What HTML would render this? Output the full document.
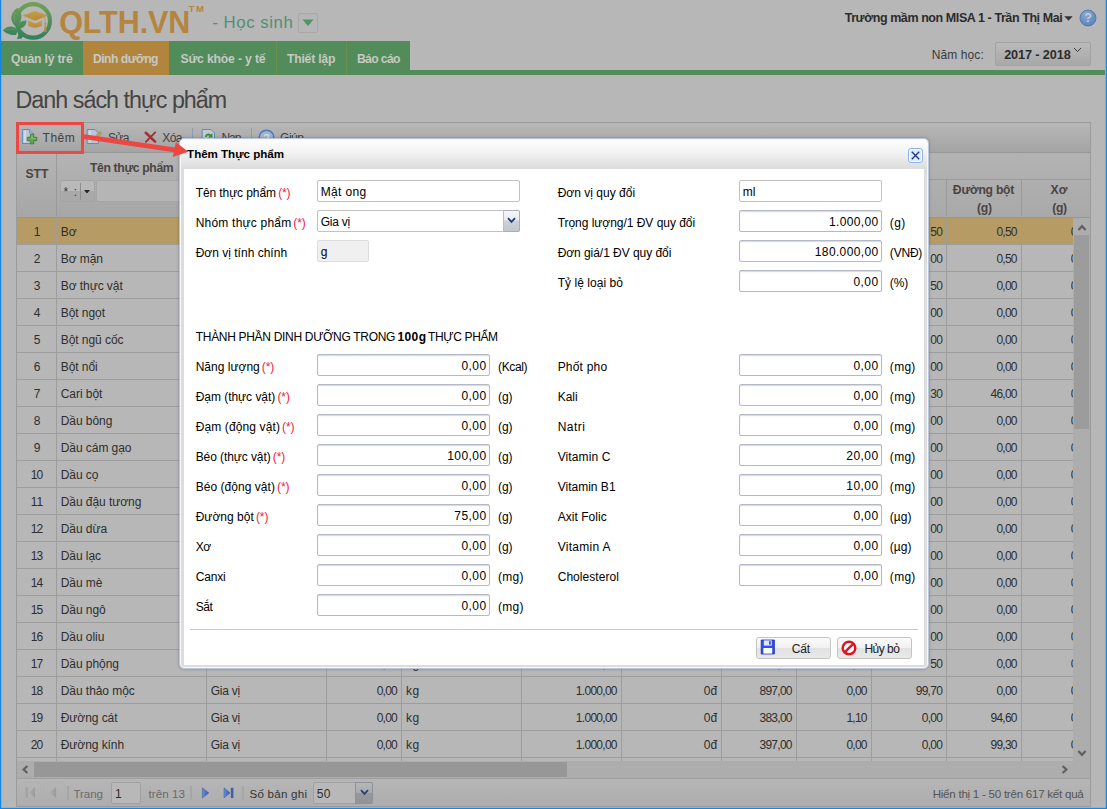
<!DOCTYPE html>
<html lang="vi"><head>
<meta charset="utf-8">
<title>QLTH.VN - Danh sách thực phẩm</title>
<style>
*{box-sizing:border-box;margin:0;padding:0}
html,body{width:1107px;height:809px;overflow:hidden}
body{position:relative;background:#b7b7b7;font-family:"Liberation Sans",sans-serif;font-size:13px;color:#2b2b2b}
.a{position:absolute}
.t{position:absolute;white-space:nowrap;line-height:1;display:inline-block}
.b{font-weight:bold}
/* nav */
.tab{position:absolute;top:41px;height:34px;background:#518c5a}
.tabt{position:absolute;font-weight:bold;font-size:12.2px;color:#c8c8c5;white-space:nowrap;line-height:1}
/* grid */
.hl{position:absolute;left:17px;width:1056px;height:1px;background:#9d9d9d}
.vl{position:absolute;top:217px;height:544px;width:1px;background:#9d9d9d}
.rt{position:absolute;white-space:nowrap;line-height:1;font-size:12px;color:#2e2e2e}
.rn{position:absolute;white-space:nowrap;line-height:1;font-size:13px;color:#2e2e2e;text-align:right}
/* dialog */
.lbl{position:absolute;white-space:nowrap;line-height:1;font-size:13px;color:#000}
.req{color:#f4173c}
.inp{position:absolute;height:22px;background:#fff;border:1px solid #b5b8c8;border-radius:2px;font-size:13px;line-height:20px;color:#000;white-space:nowrap;overflow:hidden}
.num{text-align:right;padding-right:4px;box-shadow:inset 0 1px 1px #d6d8e2}
.txt{padding-left:3px;border-color:#c1c1c1}
</style>
</head>
<body>

<!-- ================= HEADER ================= -->
<div id="header">
  <!-- logo -->
  <svg class="a" style="left:2px;top:0;width:52px;height:41px" viewBox="0 0 52 41">
    <defs>
      <linearGradient id="lg1" gradientUnits="userSpaceOnUse" x1="0" y1="2" x2="0" y2="40"><stop offset="0" stop-color="#76a058"></stop><stop offset="1" stop-color="#2f7f5b"></stop></linearGradient>
      <linearGradient id="lg2" x1="0" y1="0" x2="0" y2="1"><stop offset="0" stop-color="#bea440"></stop><stop offset="1" stop-color="#c0853b"></stop></linearGradient>
    </defs>
    <circle cx="31.2" cy="20.9" r="16.75" fill="none" stroke="url(#lg1)" stroke-width="4.1"></circle>
    <path d="M15.9 7.8 C10 10.5 7.6 18 10.8 23.2 C11.8 25 13.3 26.2 15 26.6 C18.2 24 20.6 18 18.9 12.5 C18.3 10.5 17.2 8.8 15.9 7.8 Z" fill="url(#lg1)"></path>
    <path d="M12.6 10.5 C12 15 12.2 19 12.8 23" stroke="#8aa78a" stroke-width="0.6" fill="none" opacity=".8"></path>
    <path d="M24.4 20.6 C19.6 20 15.8 23.2 15.6 28.4 C20.6 29.2 24.4 26 24.4 20.6 Z" fill="url(#lg1)"></path>
    <path d="M0.9 30.6 C4.5 26.3 11 24.8 14.6 29.4 C15.3 31 15.2 33 14 34.9 C9.5 35.6 4.4 34.1 0.9 30.6 Z" fill="url(#lg1)"></path>
    <path d="M3 30 C7 28.8 10 28.8 13 29.8" stroke="#8aa78a" stroke-width="0.5" fill="none" opacity=".7"></path>
    <path d="M14.2 28.6 L16.6 27 L19.2 31 C20.2 33 21 34 21.8 34.8 L19.6 38.5 L15 38.9 L16.4 35 Z" fill="url(#lg1)"></path>
    <path d="M20.6 15.5 L33.1 10.9 L46.1 15.5 L33.1 20.8 Z" fill="url(#lg2)"></path>
    <path d="M26.3 20.6 L33 23.4 L39.8 20.6 L39.8 25.8 C36 28.2 30 28.2 26.3 25.8 Z" fill="url(#lg2)"></path>
    <path d="M42.4 16.6 L43.3 16.3 L43.7 22.5 L44.7 32 L42.1 32 L42.9 22.5 Z" fill="url(#lg2)"></path>
    <circle cx="43.3" cy="23.8" r="1.1" fill="#bd8a3c"></circle>
  </svg>
  <span class="t b" style="font-size: 30.5px; color: rgb(181, 132, 62); top: 7px; letter-spacing: -0.06px; left: 59.13px;">QLTH.VN</span>
  <span class="t b" style="font-size: 9.6px; color: rgb(181, 132, 62); top: 4px; letter-spacing: 1.3px; left: 188.77px;">TM</span>
  <span class="t" style="font-size: 16.8px; color: rgb(79, 145, 114); top: 15px; letter-spacing: 0.55px; left: 212.24px;">- Học sinh</span>
  <div class="a" style="left:298px;top:13px;width:20px;height:20px;border:1px solid #a8a8a8;border-radius:2px;background:#b6b6b6"></div>
  <svg class="a" style="left:302px;top:19px;width:12px;height:8px" viewBox="0 0 12 8"><path d="M0.5 0.5 L11.5 0.5 L6 7 Z" fill="#4f9565"></path></svg>

  <span class="t b" style="font-size: 12.5px; color: rgb(44, 44, 44); top: 12px; letter-spacing: -0.42px; left: 844.64px;">Trường mầm non MISA 1 - Trần Thị Mai</span>
  <svg class="a" style="left:1064px;top:16px;width:9px;height:5px" viewBox="0 0 9 5"><path d="M0.3 0.3 L8.7 0.3 L4.5 4.8 Z" fill="#333"></path></svg>
  <svg class="a" style="left:1079px;top:9px;width:18px;height:18px" viewBox="0 0 18 18">
    <defs><radialGradient id="hg" cx="0.4" cy="0.3" r="0.8"><stop offset="0" stop-color="#8aa9cf"></stop><stop offset="1" stop-color="#5380b9"></stop></radialGradient></defs>
    <circle cx="9" cy="9" r="8" fill="url(#hg)" stroke="#4672ad" stroke-width="0.8"></circle>
    <text x="9" y="13.4" text-anchor="middle" font-family="Liberation Sans" font-weight="bold" font-size="12.5" fill="#c2ccd9">?</text>
  </svg>

  <span class="t" style="font-size: 12px; color: rgb(58, 58, 58); top: 49px; letter-spacing: 0.1px; left: 931.76px;">Năm học:</span>
  <div class="a" style="left:995px;top:42px;width:96px;height:24px;border:1px solid #a2a2a2;border-radius:2px;background:linear-gradient(#bababa,#a8a8a8)"></div>
  <span class="t b" style="font-size: 12.7px; color: rgb(44, 44, 44); top: 49px; letter-spacing: -0.11px; left: 1004.13px;">2017 - 2018</span>
  <svg class="a" style="left:1073px;top:47px;width:9px;height:6px" viewBox="0 0 9 6"><path d="M1 1 L4.5 4.5 L8 1" fill="none" stroke="#3a3a3a" stroke-width="1"></path></svg>
</div>

<!-- ================= NAV ================= -->
<div id="nav">
  <div class="a" style="left:1px;top:70px;width:1104px;height:5px;background:#518c5a"></div>
  <div class="tab" style="left:1px;width:82px"></div>
  <div class="tab" style="left:83px;width:86px;background:#b1853c"></div>
  <div class="tab" style="left:169px;width:107px"></div>
  <div class="tab" style="left:276px;width:70px;border-left:1px solid #6b9148"></div>
  <div class="tab" style="left:346px;width:64px;border-left:1px solid #6b9148"></div>
  <span class="tabt" style="top: 53px; letter-spacing: -0.19px; left: 10.95px;">Quản lý trẻ</span>
  <span class="tabt" style="top: 53px; letter-spacing: -0.52px; left: 92.95px;">Dinh dưỡng</span>
  <span class="tabt" style="top: 53px; letter-spacing: -0.16px; left: 180.45px;">Sức khỏe - y tế</span>
  <span class="tabt" style="top: 53px; letter-spacing: -0.21px; left: 286.95px;">Thiết lập</span>
  <span class="tabt" style="top: 53px; letter-spacing: -0.64px; left: 356.95px;">Báo cáo</span>
</div>

<!-- ================= TITLE ================= -->
<span class="t" style="font-size: 23.3px; color: rgb(69, 69, 69); top: 89px; letter-spacing: -0.97px; left: 15.45px;">Danh sách thực phẩm</span>

<!-- ================= GRID PANEL ================= -->
<div id="grid">
<div class="a" style="left:16px;top:122px;width:1075px;height:685px;border:1px solid #9b9b9b"></div>
<div class="a" style="left:17px;top:123px;width:1073px;height:29px;background:linear-gradient(#b7b7b7,#a4a4a4)"></div>
<div class="a" style="left:17px;top:152px;width:1073px;height:1px;background:#989898"></div>
<div class="a" style="left:17px;top:153px;width:1073px;height:64px;background:linear-gradient(#b3b3b3,#a9a9a9)"></div>
<div class="a" style="left:17px;top:179px;width:1073px;height:1px;background:#9a9a9a"></div>
<div class="a" style="left:17px;top:153px;width:190px;height:64px;background:linear-gradient(#b4b4b4,#a6a6a6)"></div>
<div class="a" style="left:17px;top:217px;width:1073px;height:1px;background:#979797"></div>
<div class="a" style="left:17px;top:218px;width:1056px;height:26px;background:#b69c64"></div>
<div class="a" style="left:56px;top:153px;width:1px;height:64px;background:#9a9a9a"></div>
<div class="a" style="left:206px;top:153px;width:1px;height:64px;background:#9a9a9a"></div>
<div class="a" style="left:326px;top:179px;width:1px;height:38px;background:#9a9a9a"></div>
<div class="a" style="left:401px;top:179px;width:1px;height:38px;background:#9a9a9a"></div>
<div class="a" style="left:521px;top:179px;width:1px;height:38px;background:#9a9a9a"></div>
<div class="a" style="left:621px;top:179px;width:1px;height:38px;background:#9a9a9a"></div>
<div class="a" style="left:721px;top:179px;width:1px;height:38px;background:#9a9a9a"></div>
<div class="a" style="left:796px;top:179px;width:1px;height:38px;background:#9a9a9a"></div>
<div class="a" style="left:871px;top:179px;width:1px;height:38px;background:#9a9a9a"></div>
<div class="a" style="left:946px;top:179px;width:1px;height:38px;background:#9a9a9a"></div>
<div class="a" style="left:1021px;top:179px;width:1px;height:38px;background:#9a9a9a"></div>
<div class="hl" style="top:244px"></div>
<div class="hl" style="top:271px"></div>
<div class="hl" style="top:298px"></div>
<div class="hl" style="top:325px"></div>
<div class="hl" style="top:352px"></div>
<div class="hl" style="top:379px"></div>
<div class="hl" style="top:406px"></div>
<div class="hl" style="top:433px"></div>
<div class="hl" style="top:460px"></div>
<div class="hl" style="top:487px"></div>
<div class="hl" style="top:514px"></div>
<div class="hl" style="top:541px"></div>
<div class="hl" style="top:568px"></div>
<div class="hl" style="top:595px"></div>
<div class="hl" style="top:622px"></div>
<div class="hl" style="top:649px"></div>
<div class="hl" style="top:676px"></div>
<div class="hl" style="top:703px"></div>
<div class="hl" style="top:730px"></div>
<div class="hl" style="top:757px"></div>
<div class="a" style="left:17px;top:244px;width:1056px;height:1px;background:repeating-linear-gradient(90deg,#b69c64 0,#b69c64 1px,#9d9d9d 1px,#9d9d9d 2px)"></div>
<div class="vl" style="left:56px"></div>
<div class="vl" style="left:206px"></div>
<div class="vl" style="left:326px"></div>
<div class="vl" style="left:401px"></div>
<div class="vl" style="left:521px"></div>
<div class="vl" style="left:621px"></div>
<div class="vl" style="left:721px"></div>
<div class="vl" style="left:796px"></div>
<div class="vl" style="left:871px"></div>
<div class="vl" style="left:946px"></div>
<div class="vl" style="left:1021px"></div>
<span class="rt" style="top: 226px; letter-spacing: -0.21px; left: 33.66px;">1</span>
<span class="rt" style="letter-spacing: -0.06px; top: 226px; left: 60.76px;">Bơ</span>
<span class="rt" style="top: 226px; letter-spacing: -0.26px; left: 210.76px;">Gia vị</span>
<span class="rt" style="top: 226px; letter-spacing: -0.76px; left: 376.65px;">0,00</span>
<span class="rt" style="top: 226px; letter-spacing: 0.39px; left: 406.06px;">kg</span>
<span class="rt" style="top: 226px; letter-spacing: -0.72px; left: 575.87px;">1.000,00</span>
<span class="rt" style="top: 226px; letter-spacing: 0.02px; left: 703.77px;">0đ</span>
<span class="rt" style="top: 226px; letter-spacing: -0.72px; left: 759.43px;">758,00</span>
<span class="rt" style="top: 226px; letter-spacing: -0.76px; left: 846.45px;">0,50</span>
<span class="rt" style="top: 226px; letter-spacing: -0.88px; left: 930.37px;">50</span>
<span class="rt" style="top: 226px; letter-spacing: -0.76px; left: 996.45px;">0,50</span>
<span class="rt" style="width: 2.3px; overflow: hidden; top: 226px; left: 1070.76px;">0,00</span>
<span class="rt" style="top: 253px; letter-spacing: -0.21px; left: 33.66px;">2</span>
<span class="rt" style="letter-spacing: -0.06px; top: 253px; left: 60.76px;">Bơ mặn</span>
<span class="rt" style="top: 253px; letter-spacing: -0.26px; left: 210.76px;">Gia vị</span>
<span class="rt" style="top: 253px; letter-spacing: -0.76px; left: 376.65px;">0,00</span>
<span class="rt" style="top: 253px; letter-spacing: 0.39px; left: 406.06px;">kg</span>
<span class="rt" style="top: 253px; letter-spacing: -0.72px; left: 575.87px;">1.000,00</span>
<span class="rt" style="top: 253px; letter-spacing: 0.02px; left: 703.77px;">0đ</span>
<span class="rt" style="top: 253px; letter-spacing: -0.72px; left: 759.43px;">758,00</span>
<span class="rt" style="top: 253px; letter-spacing: -0.76px; left: 846.45px;">0,50</span>
<span class="rt" style="top: 253px; letter-spacing: -0.88px; left: 930.37px;">00</span>
<span class="rt" style="top: 253px; letter-spacing: -0.76px; left: 996.45px;">0,50</span>
<span class="rt" style="width: 2.3px; overflow: hidden; top: 253px; left: 1070.76px;">0,00</span>
<span class="rt" style="top: 280px; letter-spacing: -0.21px; left: 33.66px;">3</span>
<span class="rt" style="letter-spacing: -0.06px; top: 280px; left: 60.76px;">Bơ thực vật</span>
<span class="rt" style="top: 280px; letter-spacing: -0.26px; left: 210.76px;">Gia vị</span>
<span class="rt" style="top: 280px; letter-spacing: -0.76px; left: 376.65px;">0,00</span>
<span class="rt" style="top: 280px; letter-spacing: 0.39px; left: 406.06px;">kg</span>
<span class="rt" style="top: 280px; letter-spacing: -0.72px; left: 575.87px;">1.000,00</span>
<span class="rt" style="top: 280px; letter-spacing: 0.02px; left: 703.77px;">0đ</span>
<span class="rt" style="top: 280px; letter-spacing: -0.72px; left: 759.43px;">750,00</span>
<span class="rt" style="top: 280px; letter-spacing: -0.76px; left: 846.45px;">0,50</span>
<span class="rt" style="top: 280px; letter-spacing: -0.88px; left: 930.37px;">50</span>
<span class="rt" style="top: 280px; letter-spacing: -0.76px; left: 996.45px;">0,00</span>
<span class="rt" style="width: 2.3px; overflow: hidden; top: 280px; left: 1070.76px;">0,00</span>
<span class="rt" style="top: 307px; letter-spacing: -0.21px; left: 33.66px;">4</span>
<span class="rt" style="letter-spacing: -0.06px; top: 307px; left: 60.76px;">Bột ngọt</span>
<span class="rt" style="top: 307px; letter-spacing: -0.26px; left: 210.76px;">Gia vị</span>
<span class="rt" style="top: 307px; letter-spacing: -0.76px; left: 376.65px;">0,00</span>
<span class="rt" style="top: 307px; letter-spacing: 0.39px; left: 406.06px;">kg</span>
<span class="rt" style="top: 307px; letter-spacing: -0.72px; left: 575.87px;">1.000,00</span>
<span class="rt" style="top: 307px; letter-spacing: 0.02px; left: 703.77px;">0đ</span>
<span class="rt" style="top: 307px; letter-spacing: -0.76px; left: 771.45px;">0,00</span>
<span class="rt" style="top: 307px; letter-spacing: -0.76px; left: 846.45px;">0,00</span>
<span class="rt" style="top: 307px; letter-spacing: -0.88px; left: 930.37px;">00</span>
<span class="rt" style="top: 307px; letter-spacing: -0.76px; left: 996.45px;">0,00</span>
<span class="rt" style="width: 2.3px; overflow: hidden; top: 307px; left: 1070.76px;">0,00</span>
<span class="rt" style="top: 334px; letter-spacing: -0.21px; left: 33.66px;">5</span>
<span class="rt" style="letter-spacing: -0.06px; top: 334px; left: 60.76px;">Bột ngũ cốc</span>
<span class="rt" style="top: 334px; letter-spacing: -0.26px; left: 210.76px;">Gia vị</span>
<span class="rt" style="top: 334px; letter-spacing: -0.76px; left: 376.65px;">0,00</span>
<span class="rt" style="top: 334px; letter-spacing: 0.39px; left: 406.06px;">kg</span>
<span class="rt" style="top: 334px; letter-spacing: -0.72px; left: 575.87px;">1.000,00</span>
<span class="rt" style="top: 334px; letter-spacing: 0.02px; left: 703.77px;">0đ</span>
<span class="rt" style="top: 334px; letter-spacing: -0.72px; left: 759.43px;">379,00</span>
<span class="rt" style="top: 334px; letter-spacing: -0.74px; left: 840.46px;">12,40</span>
<span class="rt" style="top: 334px; letter-spacing: -0.88px; left: 930.37px;">00</span>
<span class="rt" style="top: 334px; letter-spacing: -0.76px; left: 996.45px;">0,00</span>
<span class="rt" style="width: 2.3px; overflow: hidden; top: 334px; left: 1070.76px;">0,00</span>
<span class="rt" style="top: 361px; letter-spacing: -0.21px; left: 33.66px;">6</span>
<span class="rt" style="letter-spacing: -0.06px; top: 361px; left: 60.76px;">Bột nổi</span>
<span class="rt" style="top: 361px; letter-spacing: -0.26px; left: 210.76px;">Gia vị</span>
<span class="rt" style="top: 361px; letter-spacing: -0.76px; left: 376.65px;">0,00</span>
<span class="rt" style="top: 361px; letter-spacing: 0.39px; left: 406.06px;">kg</span>
<span class="rt" style="top: 361px; letter-spacing: -0.72px; left: 575.87px;">1.000,00</span>
<span class="rt" style="top: 361px; letter-spacing: 0.02px; left: 703.77px;">0đ</span>
<span class="rt" style="top: 361px; letter-spacing: -0.76px; left: 771.45px;">0,00</span>
<span class="rt" style="top: 361px; letter-spacing: -0.76px; left: 846.45px;">0,00</span>
<span class="rt" style="top: 361px; letter-spacing: -0.88px; left: 930.37px;">00</span>
<span class="rt" style="top: 361px; letter-spacing: -0.76px; left: 996.45px;">0,00</span>
<span class="rt" style="width: 2.3px; overflow: hidden; top: 361px; left: 1070.76px;">0,00</span>
<span class="rt" style="top: 388px; letter-spacing: -0.21px; left: 33.66px;">7</span>
<span class="rt" style="letter-spacing: -0.06px; top: 388px; left: 60.76px;">Cari bột</span>
<span class="rt" style="top: 388px; letter-spacing: -0.26px; left: 210.76px;">Gia vị</span>
<span class="rt" style="top: 388px; letter-spacing: -0.76px; left: 376.65px;">0,00</span>
<span class="rt" style="top: 388px; letter-spacing: 0.39px; left: 406.06px;">kg</span>
<span class="rt" style="top: 388px; letter-spacing: -0.72px; left: 575.87px;">1.000,00</span>
<span class="rt" style="top: 388px; letter-spacing: 0.02px; left: 703.77px;">0đ</span>
<span class="rt" style="top: 388px; letter-spacing: -0.72px; left: 759.43px;">283,00</span>
<span class="rt" style="top: 388px; letter-spacing: -0.74px; left: 840.46px;">10,20</span>
<span class="rt" style="top: 388px; letter-spacing: -0.88px; left: 930.37px;">30</span>
<span class="rt" style="top: 388px; letter-spacing: -0.74px; left: 990.46px;">46,00</span>
<span class="rt" style="width: 2.3px; overflow: hidden; top: 388px; left: 1070.76px;">0,00</span>
<span class="rt" style="top: 415px; letter-spacing: -0.21px; left: 33.66px;">8</span>
<span class="rt" style="letter-spacing: -0.06px; top: 415px; left: 60.76px;">Dầu bông</span>
<span class="rt" style="top: 415px; letter-spacing: -0.26px; left: 210.76px;">Gia vị</span>
<span class="rt" style="top: 415px; letter-spacing: -0.76px; left: 376.65px;">0,00</span>
<span class="rt" style="top: 415px; letter-spacing: 0.39px; left: 406.06px;">kg</span>
<span class="rt" style="top: 415px; letter-spacing: -0.72px; left: 575.87px;">1.000,00</span>
<span class="rt" style="top: 415px; letter-spacing: 0.02px; left: 703.77px;">0đ</span>
<span class="rt" style="top: 415px; letter-spacing: -0.72px; left: 759.43px;">900,00</span>
<span class="rt" style="top: 415px; letter-spacing: -0.76px; left: 846.45px;">0,00</span>
<span class="rt" style="top: 415px; letter-spacing: -0.88px; left: 930.37px;">00</span>
<span class="rt" style="top: 415px; letter-spacing: -0.76px; left: 996.45px;">0,00</span>
<span class="rt" style="width: 2.3px; overflow: hidden; top: 415px; left: 1070.76px;">0,00</span>
<span class="rt" style="top: 442px; letter-spacing: -0.21px; left: 33.66px;">9</span>
<span class="rt" style="letter-spacing: -0.06px; top: 442px; left: 60.76px;">Dầu cám gạo</span>
<span class="rt" style="top: 442px; letter-spacing: -0.26px; left: 210.76px;">Gia vị</span>
<span class="rt" style="top: 442px; letter-spacing: -0.76px; left: 376.65px;">0,00</span>
<span class="rt" style="top: 442px; letter-spacing: 0.39px; left: 406.06px;">kg</span>
<span class="rt" style="top: 442px; letter-spacing: -0.72px; left: 575.87px;">1.000,00</span>
<span class="rt" style="top: 442px; letter-spacing: 0.02px; left: 703.77px;">0đ</span>
<span class="rt" style="top: 442px; letter-spacing: -0.72px; left: 759.43px;">900,00</span>
<span class="rt" style="top: 442px; letter-spacing: -0.76px; left: 846.45px;">0,00</span>
<span class="rt" style="top: 442px; letter-spacing: -0.88px; left: 930.37px;">00</span>
<span class="rt" style="top: 442px; letter-spacing: -0.76px; left: 996.45px;">0,00</span>
<span class="rt" style="width: 2.3px; overflow: hidden; top: 442px; left: 1070.76px;">0,00</span>
<span class="rt" style="top: 469px; letter-spacing: -0.88px; left: 30.76px;">10</span>
<span class="rt" style="letter-spacing: -0.06px; top: 469px; left: 60.76px;">Dầu cọ</span>
<span class="rt" style="top: 469px; letter-spacing: -0.26px; left: 210.76px;">Gia vị</span>
<span class="rt" style="top: 469px; letter-spacing: -0.76px; left: 376.65px;">0,00</span>
<span class="rt" style="top: 469px; letter-spacing: 0.39px; left: 406.06px;">kg</span>
<span class="rt" style="top: 469px; letter-spacing: -0.72px; left: 575.87px;">1.000,00</span>
<span class="rt" style="top: 469px; letter-spacing: 0.02px; left: 703.77px;">0đ</span>
<span class="rt" style="top: 469px; letter-spacing: -0.72px; left: 759.43px;">900,00</span>
<span class="rt" style="top: 469px; letter-spacing: -0.76px; left: 846.45px;">0,00</span>
<span class="rt" style="top: 469px; letter-spacing: -0.88px; left: 930.37px;">00</span>
<span class="rt" style="top: 469px; letter-spacing: -0.76px; left: 996.45px;">0,00</span>
<span class="rt" style="width: 2.3px; overflow: hidden; top: 469px; left: 1070.76px;">0,00</span>
<span class="rt" style="top: 496px; letter-spacing: 0.01px; left: 30.76px;">11</span>
<span class="rt" style="letter-spacing: -0.06px; top: 496px; left: 60.76px;">Dầu đậu tương</span>
<span class="rt" style="top: 496px; letter-spacing: -0.26px; left: 210.76px;">Gia vị</span>
<span class="rt" style="top: 496px; letter-spacing: -0.76px; left: 376.65px;">0,00</span>
<span class="rt" style="top: 496px; letter-spacing: 0.39px; left: 406.06px;">kg</span>
<span class="rt" style="top: 496px; letter-spacing: -0.72px; left: 575.87px;">1.000,00</span>
<span class="rt" style="top: 496px; letter-spacing: 0.02px; left: 703.77px;">0đ</span>
<span class="rt" style="top: 496px; letter-spacing: -0.72px; left: 759.43px;">900,00</span>
<span class="rt" style="top: 496px; letter-spacing: -0.76px; left: 846.45px;">0,00</span>
<span class="rt" style="top: 496px; letter-spacing: -0.88px; left: 930.37px;">00</span>
<span class="rt" style="top: 496px; letter-spacing: -0.76px; left: 996.45px;">0,00</span>
<span class="rt" style="width: 2.3px; overflow: hidden; top: 496px; left: 1070.76px;">0,00</span>
<span class="rt" style="top: 523px; letter-spacing: -0.88px; left: 30.76px;">12</span>
<span class="rt" style="letter-spacing: -0.06px; top: 523px; left: 60.76px;">Dầu dừa</span>
<span class="rt" style="top: 523px; letter-spacing: -0.26px; left: 210.76px;">Gia vị</span>
<span class="rt" style="top: 523px; letter-spacing: -0.76px; left: 376.65px;">0,00</span>
<span class="rt" style="top: 523px; letter-spacing: 0.39px; left: 406.06px;">kg</span>
<span class="rt" style="top: 523px; letter-spacing: -0.72px; left: 575.87px;">1.000,00</span>
<span class="rt" style="top: 523px; letter-spacing: 0.02px; left: 703.77px;">0đ</span>
<span class="rt" style="top: 523px; letter-spacing: -0.72px; left: 759.43px;">900,00</span>
<span class="rt" style="top: 523px; letter-spacing: -0.76px; left: 846.45px;">0,00</span>
<span class="rt" style="top: 523px; letter-spacing: -0.88px; left: 930.37px;">00</span>
<span class="rt" style="top: 523px; letter-spacing: -0.76px; left: 996.45px;">0,00</span>
<span class="rt" style="width: 2.3px; overflow: hidden; top: 523px; left: 1070.76px;">0,00</span>
<span class="rt" style="top: 550px; letter-spacing: -0.88px; left: 30.76px;">13</span>
<span class="rt" style="letter-spacing: -0.06px; top: 550px; left: 60.76px;">Dầu lạc</span>
<span class="rt" style="top: 550px; letter-spacing: -0.26px; left: 210.76px;">Gia vị</span>
<span class="rt" style="top: 550px; letter-spacing: -0.76px; left: 376.65px;">0,00</span>
<span class="rt" style="top: 550px; letter-spacing: 0.39px; left: 406.06px;">kg</span>
<span class="rt" style="top: 550px; letter-spacing: -0.72px; left: 575.87px;">1.000,00</span>
<span class="rt" style="top: 550px; letter-spacing: 0.02px; left: 703.77px;">0đ</span>
<span class="rt" style="top: 550px; letter-spacing: -0.72px; left: 759.43px;">900,00</span>
<span class="rt" style="top: 550px; letter-spacing: -0.76px; left: 846.45px;">0,00</span>
<span class="rt" style="top: 550px; letter-spacing: -0.88px; left: 930.37px;">00</span>
<span class="rt" style="top: 550px; letter-spacing: -0.76px; left: 996.45px;">0,00</span>
<span class="rt" style="width: 2.3px; overflow: hidden; top: 550px; left: 1070.76px;">0,00</span>
<span class="rt" style="top: 577px; letter-spacing: -0.88px; left: 30.76px;">14</span>
<span class="rt" style="letter-spacing: -0.06px; top: 577px; left: 60.76px;">Dầu mè</span>
<span class="rt" style="top: 577px; letter-spacing: -0.26px; left: 210.76px;">Gia vị</span>
<span class="rt" style="top: 577px; letter-spacing: -0.76px; left: 376.65px;">0,00</span>
<span class="rt" style="top: 577px; letter-spacing: 0.39px; left: 406.06px;">kg</span>
<span class="rt" style="top: 577px; letter-spacing: -0.72px; left: 575.87px;">1.000,00</span>
<span class="rt" style="top: 577px; letter-spacing: 0.02px; left: 703.77px;">0đ</span>
<span class="rt" style="top: 577px; letter-spacing: -0.72px; left: 759.43px;">900,00</span>
<span class="rt" style="top: 577px; letter-spacing: -0.76px; left: 846.45px;">0,00</span>
<span class="rt" style="top: 577px; letter-spacing: -0.88px; left: 930.37px;">00</span>
<span class="rt" style="top: 577px; letter-spacing: -0.76px; left: 996.45px;">0,00</span>
<span class="rt" style="width: 2.3px; overflow: hidden; top: 577px; left: 1070.76px;">0,00</span>
<span class="rt" style="top: 604px; letter-spacing: -0.88px; left: 30.76px;">15</span>
<span class="rt" style="letter-spacing: -0.06px; top: 604px; left: 60.76px;">Dầu ngô</span>
<span class="rt" style="top: 604px; letter-spacing: -0.26px; left: 210.76px;">Gia vị</span>
<span class="rt" style="top: 604px; letter-spacing: -0.76px; left: 376.65px;">0,00</span>
<span class="rt" style="top: 604px; letter-spacing: 0.39px; left: 406.06px;">kg</span>
<span class="rt" style="top: 604px; letter-spacing: -0.72px; left: 575.87px;">1.000,00</span>
<span class="rt" style="top: 604px; letter-spacing: 0.02px; left: 703.77px;">0đ</span>
<span class="rt" style="top: 604px; letter-spacing: -0.72px; left: 759.43px;">900,00</span>
<span class="rt" style="top: 604px; letter-spacing: -0.76px; left: 846.45px;">0,00</span>
<span class="rt" style="top: 604px; letter-spacing: -0.88px; left: 930.37px;">00</span>
<span class="rt" style="top: 604px; letter-spacing: -0.76px; left: 996.45px;">0,00</span>
<span class="rt" style="width: 2.3px; overflow: hidden; top: 604px; left: 1070.76px;">0,00</span>
<span class="rt" style="top: 631px; letter-spacing: -0.88px; left: 30.76px;">16</span>
<span class="rt" style="letter-spacing: -0.06px; top: 631px; left: 60.76px;">Dầu oliu</span>
<span class="rt" style="top: 631px; letter-spacing: -0.26px; left: 210.76px;">Gia vị</span>
<span class="rt" style="top: 631px; letter-spacing: -0.76px; left: 376.65px;">0,00</span>
<span class="rt" style="top: 631px; letter-spacing: 0.39px; left: 406.06px;">kg</span>
<span class="rt" style="top: 631px; letter-spacing: -0.72px; left: 575.87px;">1.000,00</span>
<span class="rt" style="top: 631px; letter-spacing: 0.02px; left: 703.77px;">0đ</span>
<span class="rt" style="top: 631px; letter-spacing: -0.72px; left: 759.43px;">900,00</span>
<span class="rt" style="top: 631px; letter-spacing: -0.76px; left: 846.45px;">0,00</span>
<span class="rt" style="top: 631px; letter-spacing: -0.88px; left: 930.37px;">00</span>
<span class="rt" style="top: 631px; letter-spacing: -0.76px; left: 996.45px;">0,00</span>
<span class="rt" style="width: 2.3px; overflow: hidden; top: 631px; left: 1070.76px;">0,00</span>
<span class="rt" style="top: 658px; letter-spacing: -0.88px; left: 30.76px;">17</span>
<span class="rt" style="letter-spacing: -0.06px; top: 658px; left: 60.76px;">Dầu phộng</span>
<span class="rt" style="top: 658px; letter-spacing: -0.76px; left: 376.65px;">0,00</span>
<span class="rt" style="top: 658px; letter-spacing: 0.39px; left: 406.06px;">kg</span>
<span class="rt" style="top: 658px; letter-spacing: -0.72px; left: 575.87px;">1.000,00</span>
<span class="rt" style="top: 658px; letter-spacing: 0.02px; left: 703.77px;">0đ</span>
<span class="rt" style="top: 658px; letter-spacing: -0.72px; left: 759.43px;">897,00</span>
<span class="rt" style="top: 658px; letter-spacing: -0.76px; left: 846.45px;">0,00</span>
<span class="rt" style="top: 658px; letter-spacing: -0.88px; left: 930.37px;">50</span>
<span class="rt" style="top: 658px; letter-spacing: -0.76px; left: 996.45px;">0,00</span>
<span class="rt" style="width: 2.3px; overflow: hidden; top: 658px; left: 1070.76px;">0,00</span>
<span class="rt" style="top: 685px; letter-spacing: -0.88px; left: 30.76px;">18</span>
<span class="rt" style="letter-spacing: -0.06px; top: 685px; left: 60.76px;">Dầu thảo mộc</span>
<span class="rt" style="top: 685px; letter-spacing: -0.26px; left: 210.76px;">Gia vị</span>
<span class="rt" style="top: 685px; letter-spacing: -0.76px; left: 376.65px;">0,00</span>
<span class="rt" style="top: 685px; letter-spacing: 0.39px; left: 406.06px;">kg</span>
<span class="rt" style="top: 685px; letter-spacing: -0.72px; left: 575.87px;">1.000,00</span>
<span class="rt" style="top: 685px; letter-spacing: 0.02px; left: 703.77px;">0đ</span>
<span class="rt" style="top: 685px; letter-spacing: -0.72px; left: 759.43px;">897,00</span>
<span class="rt" style="top: 685px; letter-spacing: -0.76px; left: 846.45px;">0,00</span>
<span class="rt" style="top: 685px; letter-spacing: -0.74px; left: 915.76px;">99,70</span>
<span class="rt" style="top: 685px; letter-spacing: -0.76px; left: 996.45px;">0,00</span>
<span class="rt" style="width: 2.3px; overflow: hidden; top: 685px; left: 1070.76px;">0,00</span>
<span class="rt" style="top: 712px; letter-spacing: -0.88px; left: 30.76px;">19</span>
<span class="rt" style="letter-spacing: -0.06px; top: 712px; left: 60.76px;">Đường cát</span>
<span class="rt" style="top: 712px; letter-spacing: -0.26px; left: 210.76px;">Gia vị</span>
<span class="rt" style="top: 712px; letter-spacing: -0.76px; left: 376.65px;">0,00</span>
<span class="rt" style="top: 712px; letter-spacing: 0.39px; left: 406.06px;">kg</span>
<span class="rt" style="top: 712px; letter-spacing: -0.72px; left: 575.87px;">1.000,00</span>
<span class="rt" style="top: 712px; letter-spacing: 0.02px; left: 703.77px;">0đ</span>
<span class="rt" style="top: 712px; letter-spacing: -0.72px; left: 759.43px;">383,00</span>
<span class="rt" style="top: 712px; letter-spacing: -0.76px; left: 846.45px;">1,10</span>
<span class="rt" style="top: 712px; letter-spacing: -0.76px; left: 921.75px;">0,00</span>
<span class="rt" style="top: 712px; letter-spacing: -0.74px; left: 990.46px;">94,60</span>
<span class="rt" style="width: 2.3px; overflow: hidden; top: 712px; left: 1070.76px;">0,00</span>
<span class="rt" style="top: 739px; letter-spacing: -0.88px; left: 30.76px;">20</span>
<span class="rt" style="letter-spacing: -0.06px; top: 739px; left: 60.76px;">Đường kính</span>
<span class="rt" style="top: 739px; letter-spacing: -0.26px; left: 210.76px;">Gia vị</span>
<span class="rt" style="top: 739px; letter-spacing: -0.76px; left: 376.65px;">0,00</span>
<span class="rt" style="top: 739px; letter-spacing: 0.39px; left: 406.06px;">kg</span>
<span class="rt" style="top: 739px; letter-spacing: -0.72px; left: 575.87px;">1.000,00</span>
<span class="rt" style="top: 739px; letter-spacing: 0.02px; left: 703.77px;">0đ</span>
<span class="rt" style="top: 739px; letter-spacing: -0.72px; left: 759.43px;">397,00</span>
<span class="rt" style="top: 739px; letter-spacing: -0.76px; left: 846.45px;">0,00</span>
<span class="rt" style="top: 739px; letter-spacing: -0.76px; left: 921.75px;">0,00</span>
<span class="rt" style="top: 739px; letter-spacing: -0.74px; left: 990.46px;">99,30</span>
<span class="rt" style="width: 2.3px; overflow: hidden; top: 739px; left: 1070.76px;">0,00</span>
<span class="t b" style="font-size: 12.2px; color: rgb(74, 69, 65); top: 168px; left: 25.48px;">STT</span>
<span class="t b" style="font-size: 12.2px; color: rgb(74, 69, 65); top: 162px; letter-spacing: -0.37px; left: 90.05px;">Tên thực phẩm</span>
<span class="t b" style="font-size: 12.2px; color: rgb(74, 69, 65); top: 184px; letter-spacing: -0.25px; left: 952.85px;">Đường bột</span>
<span class="t b" style="font-size: 12.2px; color: rgb(74, 69, 65); top: 202px; letter-spacing: -0.33px; left: 977.05px;">(g)</span>
<span class="t b" style="font-size: 12.2px; color: rgb(74, 69, 65); top: 184px; letter-spacing: 0.3px; left: 1050.45px;">Xơ</span>
<span class="t b" style="font-size: 12.2px; color: rgb(74, 69, 65); top: 202px; letter-spacing: -0.43px; left: 1052.25px;">(g)</span>
<div class="a" style="left:60px;top:180px;width:35px;height:22px;border:1px solid #a4a4a4;border-radius:3px;background:linear-gradient(#b9b9b9 50%,#a9a9a9 50%)"></div>
<div class="a" style="left:80px;top:183px;width:1px;height:17px;background:#8e8e8e"></div>
<span class="t" style="font-size: 12px; color: rgb(58, 58, 58); letter-spacing: 5.6px; top: 186px; left: 63.46px;">*:</span>
<svg class="a" style="left:84.4px;top:189.6px;width:6px;height:3.6px" viewBox="0 0 6 3.6"><path d="M0 0 L6 0 L3 3.6 Z" fill="#262626"></path></svg>
<div class="a" style="left:96px;top:180px;width:107px;height:22px;border:1px solid #a6a6a6;border-radius:2px;background:#b5b5b5"></div>
<div class="a" style="left:1073px;top:218px;width:17px;height:543px;background:#adadad"></div>
<div class="a" style="left:1074px;top:235px;width:15px;height:194px;background:#9c9c9c"></div>
<svg class="a" style="left:1076.5px;top:222.6px;width:10px;height:8px" viewBox="0 0 10 8"><path d="M1.4 7 L5 3.2 L8.6 7" fill="none" stroke="#606060" stroke-width="2.2"></path></svg>
<svg class="a" style="left:1076.5px;top:749.6px;width:10px;height:8px" viewBox="0 0 10 8"><path d="M1.4 1 L5 4.8 L8.6 1" fill="none" stroke="#606060" stroke-width="2.2"></path></svg>
<div class="a" style="left:17px;top:761px;width:1073px;height:17px;background:#adadad"></div>
<div class="a" style="left:34px;top:762px;width:533px;height:15px;background:#979797"></div>
<svg class="a" style="left:21px;top:765px;width:8px;height:9px" viewBox="0 0 8 9"><path d="M6.4 1 L2.6 4.5 L6.4 8" fill="none" stroke="#606060" stroke-width="2.2"></path></svg>
<svg class="a" style="left:1061px;top:765px;width:8px;height:9px" viewBox="0 0 8 9"><path d="M1.6 1 L5.4 4.5 L1.6 8" fill="none" stroke="#606060" stroke-width="2.2"></path></svg>
<div class="a" style="left:1073px;top:761px;width:17px;height:17px;background:#adadad"></div>
<div class="a" style="left:17px;top:778px;width:1073px;height:1px;background:#9f9f9f"></div>
<div class="a" style="left:17px;top:779px;width:1073px;height:27px;background:linear-gradient(#b6b6b6,#adadad)"></div>
<svg class="a" style="left:21px;top:128px;width:18px;height:18px" viewBox="0 0 18 18"><path d="M1.4 1.5 H8.5 L12.2 5 V15.5 H1.4 Z" fill="#bcc6d2" stroke="#5d8dbd" stroke-width="1"></path><path d="M3 2.5 H5 V14.5 H3 Z" fill="#d2d9e2"></path><path d="M8.5 1.5 V5 H12.2" fill="#aebccc" stroke="#5d8dbd" stroke-width="0.8"></path><path d="M9.3 6.3 H12.7 V9.3 H15.8 V12.7 H12.7 V15.8 H9.3 V12.7 H6.2 V9.3 H9.3 Z" fill="#6aa55c" stroke="#3e7d3a" stroke-width="0.9"></path><path d="M10.2 7.2 H11.8 V10.2 H14.9 V11 H10.2 Z" fill="#8cc07e" opacity=".7"></path></svg>
<span class="t" style="font-size: 12px; color: rgb(65, 65, 65); top: 132px; letter-spacing: 0.53px; left: 42.56px;">Thêm</span>
<svg class="a" style="left:86px;top:128px;width:18px;height:18px" viewBox="0 0 18 18"><path d="M1.2 1.5 H9 L12.5 5 V15.5 H1.2 Z" fill="#bcc6d2" stroke="#5d8dbd" stroke-width="1"></path><path d="M2.8 2.5 H4.8 V14.5 H2.8 Z" fill="#d2d9e2"></path><path d="M8 9.5 L13.8 3.6 L15.8 5.4 L10 11.4 L7.6 12 Z" fill="#b9a15a" stroke="#9c8742" stroke-width="0.6"></path><path d="M8 9.5 L10 11.4 L7.6 12 Z" fill="#8d8d8d"></path></svg>
<span class="t" style="font-size: 12px; color: rgb(65, 65, 65); top: 132px; letter-spacing: -0.72px; left: 108.06px;">Sửa</span>
<svg class="a" style="left:144px;top:131px;width:14px;height:14px" viewBox="0 0 14 14"><path d="M1.8 1.8 L11 10.6" stroke="#a52f33" stroke-width="2.6" stroke-linecap="round" fill="none"></path><path d="M11.2 1.4 L1.9 10.8" stroke="#a52f33" stroke-width="1.9" stroke-linecap="round" fill="none"></path></svg>
<span class="t" style="font-size: 12px; color: rgb(65, 65, 65); top: 132px; letter-spacing: -0.54px; left: 162.26px;">Xóa</span>
<div class="a" style="left:192px;top:128px;width:1px;height:17px;background:#8d9ab2"></div>
<svg class="a" style="left:201px;top:128px;width:16px;height:18px" viewBox="0 0 16 18"><path d="M1.2 1.5 H10 L13.5 5 V15.5 H1.2 Z" fill="#c3cad2" stroke="#5d8dbd" stroke-width="1"></path><path d="M4 9 C4 5.5 8 4.5 10 6.5 L11.5 5 V9.5 H7 L8.6 8 C7.5 7 5.8 7.5 5.8 9 Z" fill="#3d8c3d"></path></svg>
<span class="t" style="font-size: 12px; color: rgb(65, 65, 65); top: 132px; letter-spacing: -1.02px; left: 221.46px;">Nạp</span>
<div class="a" style="left:251px;top:128px;width:1px;height:17px;background:#8d9ab2"></div>
<svg class="a" style="left:258px;top:129px;width:17px;height:17px" viewBox="0 0 17 17"><circle cx="8.5" cy="8.5" r="7.3" fill="#9fb3cc" stroke="#4c79b8" stroke-width="1.5"></circle><text x="8.5" y="12.6" text-anchor="middle" font-family="Liberation Sans" font-weight="bold" font-size="11.5" fill="#d5dde8">?</text></svg>
<span class="t" style="font-size: 12px; color: rgb(65, 65, 65); top: 132px; letter-spacing: -0.49px; left: 280.06px;">Giúp</span>
<div class="a" style="left:19px;top:782px;width:22px;height:22px;border:1px solid #b0b0b0;border-radius:3px"></div>
<div class="a" style="left:43px;top:782px;width:22px;height:22px;border:1px solid #b0b0b0;border-radius:3px"></div>
<svg class="a" style="left:24px;top:786px;width:14px;height:14px" viewBox="24 786 14 14"><defs><linearGradient id="dg" x1="0" y1="0" x2="1" y2="0"><stop offset="0" stop-color="#adadad"></stop><stop offset="1" stop-color="#9b9b9b"></stop></linearGradient></defs><rect x="25.1" y="787" width="2.5" height="11" fill="url(#dg)"></rect><path d="M35 787 V798 L29.3 792.5 Z" fill="url(#dg)"></path></svg>
<svg class="a" style="left:48px;top:786px;width:10px;height:14px" viewBox="48 786 10 14"><path d="M56.1 787 V798 L50 792.5 Z" fill="url(#dg)"></path></svg>
<div class="a" style="left:67px;top:786px;width:2px;height:14px;background:#a6a6a6"></div>
<span class="t" style="font-size: 11.6px; color: rgb(106, 106, 106); top: 788px; letter-spacing: -0.1px; left: 73.48px;">Trang</span>
<div class="a" style="left:111px;top:782px;width:30px;height:22px;border:1px solid #a0a0a0;border-radius:2px;background:#b8b8b8"></div>
<span class="t" style="font-size: 12px; color: rgb(46, 46, 46); top: 788px; letter-spacing: -0.61px; left: 114.96px;">1</span>
<span class="t" style="font-size: 11.6px; color: rgb(106, 106, 106); top: 788px; letter-spacing: 0.07px; left: 148.48px;">trên 13</span>
<div class="a" style="left:190px;top:786px;width:2px;height:14px;background:#a6a6a6"></div>
<svg class="a" style="left:200px;top:786px;width:12px;height:14px" viewBox="200 786 12 14"><defs><linearGradient id="ng" x1="0" y1="0" x2="1" y2="0"><stop offset="0" stop-color="#6d8fd6"></stop><stop offset="1" stop-color="#2f55ae"></stop></linearGradient></defs><path d="M202.4 787.8 V798 L208.8 792.9 Z" fill="url(#ng)" stroke="#3559ad" stroke-width="0.5"></path></svg>
<svg class="a" style="left:222px;top:786px;width:14px;height:14px" viewBox="222 786 14 14"><path d="M224 787.8 V798 L230 792.9 Z" fill="url(#ng)" stroke="#3559ad" stroke-width="0.5"></path><rect x="230.8" y="787.8" width="2.6" height="10.2" fill="#3a5fb4"></rect></svg>
<div class="a" style="left:242px;top:786px;width:2px;height:14px;background:#a6a6a6"></div>
<span class="t" style="font-size: 11.6px; color: rgb(51, 51, 51); top: 788px; letter-spacing: 0.23px; left: 249.48px;">Số bản ghi</span>
<div class="a" style="left:313px;top:782px;width:60px;height:22px;border:1px solid #a0a0a0;border-radius:2px;background:#b8b8b8"></div>
<span class="t" style="font-size: 12px; color: rgb(46, 46, 46); top: 788px; letter-spacing: 0.22px; left: 316.76px;">50</span>
<div class="a" style="left:355px;top:782px;width:18px;height:22px;border:1px solid #8e909c;border-radius:0 2px 2px 0;background:linear-gradient(#b6b7ba 0,#a9aaad 48%,#97989c 52%,#939498 100%)"></div>
<svg class="a" style="left:359.5px;top:789px;width:9px;height:7px" viewBox="0 0 9 7"><path d="M1 1.2 L4.5 4.8 L8 1.2" fill="none" stroke="#2b4379" stroke-width="1.9"></path></svg>
<span class="t" style="font-size: 11.6px; color: rgb(85, 85, 85); top: 788px; letter-spacing: -0.26px; left: 932.68px;">Hiển thị 1 - 50 trên 617 kết quả</span>
</div>


<!-- ================= ANNOTATION ================= -->
<div class="a" style="left:16px;top:122px;width:68px;height:32px;border:3px solid #ec4740"></div>
<svg class="a" style="left:80px;top:126px;width:120px;height:40px;z-index:5" viewBox="80 126 120 40"><path d="M84 136.6 L176 150.2" stroke="#ec4740" stroke-width="4.8" fill="none"></path><path d="M175.9 142.3 L188.4 151.7 L172.7 156.9 Z" fill="#ec4740"></path></svg>


<!-- ================= DIALOG ================= -->
<div id="dialog">
<div class="a" style="left:179px;top:138px;width:749.5px;height:531.4px;border-radius:5px;border:1px solid #b9c6dc;background:linear-gradient(#fdfdfd 0,#f4f4f4 12px,#dddddd 29px,#dcdcdc 30px,#dcdcdc 100%);box-shadow:inset 0 0 0 1px #f4f7fc, 0 0 3px rgba(0,0,0,.3)"></div>
<div class="a" style="left:184px;top:169px;width:740px;height:496px;background:#fff"></div>
<span class="t b" style="font-size: 11.6px; color: rgb(0, 0, 0); top: 148px; letter-spacing: -0.03px; left: 187.08px;">Thêm Thực phẩm</span>
<div class="a" style="left:908px;top:148px;width:15px;height:15px;border:1px solid #8fb2e6;border-radius:3px;background:#dcebfc;box-shadow:inset 0 0 0 1px #fff"></div>
<svg class="a" style="left:911px;top:151px;width:9px;height:9px" viewBox="0 0 9 9"><path d="M0.8 0.8 L8.2 8.2 M8.2 0.8 L0.8 8.2" stroke="#1f3287" stroke-width="1.3" fill="none"></path></svg>
<span class="lbl" style="font-size: 12px; top: 187px; letter-spacing: -0.09px; left: 195.66px;">Tên thực phẩm</span>
<span class="lbl req" style="font-size: 12px; top: 187px; letter-spacing: -0.1px; left: 278.16px;">(*)</span>
<span class="lbl" style="font-size: 12px; top: 217px; letter-spacing: 0.22px; left: 195.66px;">Nhóm thực phẩm</span>
<span class="lbl req" style="font-size: 12px; top: 217px; letter-spacing: -0.1px; left: 293.36px;">(*)</span>
<span class="lbl" style="font-size: 12px; top: 247px; letter-spacing: 0.01px; left: 195.66px;">Đơn vị tính chính</span>
<div class="inp txt" style="left:317px;top:180px;width:203px"></div>
<span class="lbl" style="font-size: 12px; top: 186px; letter-spacing: 0.37px; left: 320.66px;">Mật ong</span>
<div class="inp txt" style="left:317px;top:210px;width:203px"></div>
<span class="lbl" style="font-size: 12px; top: 216px; letter-spacing: -0.22px; left: 320.66px;">Gia vị</span>
<div class="a" style="left:503px;top:210px;width:17px;height:22px;border:1px solid #a9acc4;border-left-color:#b9bccb;border-radius:0 2px 2px 0;background:linear-gradient(#f6f7f9 0,#e9eaee 45%,#cfd1d8 50%,#c4c6ce 100%)"></div>
<svg class="a" style="left:507px;top:217px;width:9px;height:7px" viewBox="0 0 9 7"><path d="M1 1.2 L4.5 4.8 L8 1.2" fill="none" stroke="#1f3f82" stroke-width="1.9"></path></svg>
<div class="inp" style="left:317px;top:240px;width:52px;background:#f0f0f0;border-color:#dcdcdc"></div>
<span class="lbl" style="font-size: 12px; top: 246px; left: 320.86px;">g</span>
<span class="lbl" style="font-size: 12px; top: 187px; letter-spacing: 0.02px; left: 557.66px;">Đơn vị quy đổi</span>
<span class="lbl" style="font-size: 12px; top: 217px; letter-spacing: -0.03px; left: 557.66px;">Trọng lượng/1 ĐV quy đổi</span>
<span class="lbl" style="font-size: 12px; top: 247px; letter-spacing: -0.05px; left: 557.66px;">Đơn giá/1 ĐV quy đổi</span>
<span class="lbl" style="font-size: 12px; top: 277px; letter-spacing: 0.05px; left: 557.66px;">Tỷ lệ loại bỏ</span>
<div class="inp txt" style="left:739px;top:180px;width:143px"></div>
<span class="lbl" style="font-size: 12px; top: 186px; left: 742.86px;">ml</span>
<div class="inp num" style="left:739px;top:210px;width:143px"></div>
<span class="lbl" style="font-size: 12px; top: 216px; letter-spacing: 0.35px; left: 828.97px;">1.000,00</span>
<span class="lbl" style="font-size: 12px; top: 217px; letter-spacing: 0.3px; left: 889.86px;">(g)</span>
<div class="inp num" style="left:739px;top:240px;width:143px"></div>
<span class="lbl" style="font-size: 12px; top: 246px; letter-spacing: 0.36px; left: 814.83px;">180.000,00</span>
<span class="lbl" style="font-size: 12px; top: 247px; letter-spacing: -0.21px; left: 889.86px;">(VNĐ)</span>
<div class="inp num" style="left:739px;top:270px;width:143px"></div>
<span class="lbl" style="font-size: 12px; top: 276px; letter-spacing: 0.44px; left: 853.46px;">0,00</span>
<span class="lbl" style="font-size: 12px; top: 277px; letter-spacing: -0.2px; left: 889.86px;">(%)</span>
<span class="lbl" style="font-size: 12px; top: 331px; letter-spacing: -0.31px; left: 195.76px;">THÀNH PHẦN DINH DƯỠNG TRONG</span>
<span class="lbl b" style="font-size: 12px; top: 331px; letter-spacing: 0.41px; left: 397.46px;">100g</span>
<span class="lbl" style="font-size: 12px; top: 331px; letter-spacing: -0.36px; left: 428.06px;">THỰC PHẨM</span>
<span class="lbl" style="font-size: 12px; top: 361px; letter-spacing: 0.02px; left: 195.66px;">Năng lượng</span>
<span class="lbl req" style="font-size: 12px; top: 361px; letter-spacing: -0.1px; left: 261.86px;">(*)</span>
<div class="inp num" style="left:317px;top:354px;width:173px"></div>
<span class="lbl" style="font-size: 12px; top: 360px; letter-spacing: 0.44px; left: 461.46px;">0,00</span>
<span class="lbl" style="font-size: 12px; top: 361px; letter-spacing: -0.37px; left: 498.06px;">(Kcal)</span>
<span class="lbl" style="font-size: 12px; top: 391px; letter-spacing: -0.03px; left: 195.66px;">Đạm (thực vật)</span>
<span class="lbl req" style="font-size: 12px; top: 391px; letter-spacing: -0.1px; left: 277.46px;">(*)</span>
<div class="inp num" style="left:317px;top:384px;width:173px"></div>
<span class="lbl" style="font-size: 12px; top: 390px; letter-spacing: 0.44px; left: 461.46px;">0,00</span>
<span class="lbl" style="font-size: 12px; top: 391px; letter-spacing: -0.15px; left: 498.06px;">(g)</span>
<span class="lbl" style="font-size: 12px; top: 421px; letter-spacing: 0.12px; left: 195.66px;">Đạm (động vật)</span>
<span class="lbl req" style="font-size: 12px; top: 421px; letter-spacing: -0.1px; left: 282.06px;">(*)</span>
<div class="inp num" style="left:317px;top:414px;width:173px"></div>
<span class="lbl" style="font-size: 12px; top: 420px; letter-spacing: 0.44px; left: 461.46px;">0,00</span>
<span class="lbl" style="font-size: 12px; top: 421px; letter-spacing: -0.15px; left: 498.06px;">(g)</span>
<span class="lbl" style="font-size: 12px; top: 451px; letter-spacing: -0.08px; left: 195.66px;">Béo (thực vật)</span>
<span class="lbl req" style="font-size: 12px; top: 451px; letter-spacing: -0.1px; left: 272.86px;">(*)</span>
<div class="inp num" style="left:317px;top:444px;width:173px"></div>
<span class="lbl" style="font-size: 12px; top: 450px; letter-spacing: 0.44px; left: 447.24px;">100,00</span>
<span class="lbl" style="font-size: 12px; top: 451px; letter-spacing: -0.15px; left: 498.06px;">(g)</span>
<span class="lbl" style="font-size: 12px; top: 481px; letter-spacing: 0.04px; left: 195.66px;">Béo (động vật)</span>
<span class="lbl req" style="font-size: 12px; top: 481px; letter-spacing: -0.1px; left: 277.06px;">(*)</span>
<div class="inp num" style="left:317px;top:474px;width:173px"></div>
<span class="lbl" style="font-size: 12px; top: 480px; letter-spacing: 0.44px; left: 461.46px;">0,00</span>
<span class="lbl" style="font-size: 12px; top: 481px; letter-spacing: -0.15px; left: 498.06px;">(g)</span>
<span class="lbl" style="font-size: 12px; top: 511px; letter-spacing: 0.03px; left: 195.66px;">Đường bột</span>
<span class="lbl req" style="font-size: 12px; top: 511px; letter-spacing: -0.1px; left: 255.96px;">(*)</span>
<div class="inp num" style="left:317px;top:504px;width:173px"></div>
<span class="lbl" style="font-size: 12px; top: 510px; letter-spacing: 0.44px; left: 454.35px;">75,00</span>
<span class="lbl" style="font-size: 12px; top: 511px; letter-spacing: -0.15px; left: 498.06px;">(g)</span>
<span class="lbl" style="font-size: 12px; top: 541px; letter-spacing: -0.49px; left: 195.66px;">Xơ</span>
<div class="inp num" style="left:317px;top:534px;width:173px"></div>
<span class="lbl" style="font-size: 12px; top: 540px; letter-spacing: 0.44px; left: 461.46px;">0,00</span>
<span class="lbl" style="font-size: 12px; top: 541px; letter-spacing: -0.15px; left: 498.06px;">(g)</span>
<span class="lbl" style="font-size: 12px; top: 571px; letter-spacing: -0.15px; left: 195.66px;">Canxi</span>
<div class="inp num" style="left:317px;top:564px;width:173px"></div>
<span class="lbl" style="font-size: 12px; top: 570px; letter-spacing: 0.44px; left: 461.46px;">0,00</span>
<span class="lbl" style="font-size: 12px; top: 571px; letter-spacing: 0.27px; left: 498.06px;">(mg)</span>
<span class="lbl" style="font-size: 12px; top: 601px; letter-spacing: -0.47px; left: 195.66px;">Sắt</span>
<div class="inp num" style="left:317px;top:594px;width:173px"></div>
<span class="lbl" style="font-size: 12px; top: 600px; letter-spacing: 0.44px; left: 461.46px;">0,00</span>
<span class="lbl" style="font-size: 12px; top: 601px; letter-spacing: 0.27px; left: 498.06px;">(mg)</span>
<span class="lbl" style="font-size: 12px; top: 361px; letter-spacing: 0.2px; left: 557.66px;">Phốt pho</span>
<div class="inp num" style="left:739px;top:354px;width:143px"></div>
<span class="lbl" style="font-size: 12px; top: 360px; letter-spacing: 0.44px; left: 853.46px;">0,00</span>
<span class="lbl" style="font-size: 12px; top: 361px; letter-spacing: 0.27px; left: 889.86px;">(mg)</span>
<span class="lbl" style="font-size: 12px; top: 391px; letter-spacing: 0.02px; left: 557.66px;">Kali</span>
<div class="inp num" style="left:739px;top:384px;width:143px"></div>
<span class="lbl" style="font-size: 12px; top: 390px; letter-spacing: 0.44px; left: 853.46px;">0,00</span>
<span class="lbl" style="font-size: 12px; top: 391px; letter-spacing: 0.27px; left: 889.86px;">(mg)</span>
<span class="lbl" style="font-size: 12px; top: 421px; letter-spacing: 0.46px; left: 557.66px;">Natri</span>
<div class="inp num" style="left:739px;top:414px;width:143px"></div>
<span class="lbl" style="font-size: 12px; top: 420px; letter-spacing: 0.44px; left: 853.46px;">0,00</span>
<span class="lbl" style="font-size: 12px; top: 421px; letter-spacing: 0.27px; left: 889.86px;">(mg)</span>
<span class="lbl" style="font-size: 12px; top: 451px; letter-spacing: 0.12px; left: 557.66px;">Vitamin C</span>
<div class="inp num" style="left:739px;top:444px;width:143px"></div>
<span class="lbl" style="font-size: 12px; top: 450px; letter-spacing: 0.44px; left: 846.35px;">20,00</span>
<span class="lbl" style="font-size: 12px; top: 451px; letter-spacing: 0.27px; left: 889.86px;">(mg)</span>
<span class="lbl" style="font-size: 12px; top: 481px; letter-spacing: 0.01px; left: 557.66px;">Vitamin B1</span>
<div class="inp num" style="left:739px;top:474px;width:143px"></div>
<span class="lbl" style="font-size: 12px; top: 480px; letter-spacing: 0.44px; left: 846.35px;">10,00</span>
<span class="lbl" style="font-size: 12px; top: 481px; letter-spacing: 0.27px; left: 889.86px;">(mg)</span>
<span class="lbl" style="font-size: 12px; top: 511px; letter-spacing: 0.04px; left: 557.66px;">Axit Folic</span>
<div class="inp num" style="left:739px;top:504px;width:143px"></div>
<span class="lbl" style="font-size: 12px; top: 510px; letter-spacing: 0.44px; left: 853.46px;">0,00</span>
<span class="lbl" style="font-size: 12px; top: 511px; letter-spacing: 0px; left: 889.86px;">(µg)</span>
<span class="lbl" style="font-size: 12px; top: 541px; letter-spacing: 0.29px; left: 557.66px;">Vitamin A</span>
<div class="inp num" style="left:739px;top:534px;width:143px"></div>
<span class="lbl" style="font-size: 12px; top: 540px; letter-spacing: 0.44px; left: 853.46px;">0,00</span>
<span class="lbl" style="font-size: 12px; top: 541px; letter-spacing: 0px; left: 889.86px;">(µg)</span>
<span class="lbl" style="font-size: 12px; top: 571px; letter-spacing: 0.06px; left: 557.66px;">Cholesterol</span>
<div class="inp num" style="left:739px;top:564px;width:143px"></div>
<span class="lbl" style="font-size: 12px; top: 570px; letter-spacing: 0.44px; left: 853.46px;">0,00</span>
<span class="lbl" style="font-size: 12px; top: 571px; letter-spacing: 0.27px; left: 889.86px;">(mg)</span>
<div class="a" style="left:190px;top:629px;width:728px;height:1px;background:#c9c9c9"></div>
<div class="a" style="left:756px;top:637px;width:75px;height:22px;border:1px solid #c4c4c4;border-radius:3px;background:linear-gradient(#fbfbfb 0,#f1f1f1 50%,#e2e2e2 52%,#e9e9e9 100%)"></div>
<div class="a" style="left:837px;top:637px;width:75px;height:22px;border:1px solid #c4c4c4;border-radius:3px;background:linear-gradient(#fbfbfb 0,#f1f1f1 50%,#e2e2e2 52%,#e9e9e9 100%)"></div>
<svg class="a" style="left:760px;top:639px;width:16px;height:16px" viewBox="0 0 16 16"><path d="M1.2 1 H14.4 V15 H1.2 Z" fill="#2f4fe8" stroke="#1c2fb0" stroke-width="0.8"></path><rect x="3.8" y="1.4" width="8" height="5.2" fill="#dfe6ff"></rect><rect x="9" y="2.2" width="1.8" height="3.4" fill="#2f4fe8"></rect><rect x="3.4" y="9" width="8.8" height="5.6" fill="#fff"></rect></svg>
<span class="lbl" style="font-size: 12px; color: rgb(34, 34, 34); top: 643px; letter-spacing: -0.2px; left: 791.86px;">Cất</span>
<svg class="a" style="left:841px;top:640px;width:16px;height:16px" viewBox="0 0 16 16"><circle cx="8" cy="8" r="6.3" fill="#fff" stroke="#e3131f" stroke-width="2.4"></circle><path d="M3.6 12.4 L12.4 3.6" stroke="#e3131f" stroke-width="2.4"></path></svg>
<span class="lbl" style="font-size: 12px; color: rgb(34, 34, 34); top: 643px; letter-spacing: -0.53px; left: 864.46px;">Hủy bỏ</span>
</div>


<!-- ================= WINDOW FRAME ================= -->
<div class="a" style="left:0;top:0;width:1px;height:809px;background:#1487e2"></div>
<div class="a" style="left:1px;top:0;width:1px;height:809px;background:rgba(20,135,226,.22)"></div>
<div class="a" style="left:1105px;top:0;width:1px;height:809px;background:rgba(20,135,226,.22)"></div>
<div class="a" style="left:1106px;top:0;width:1px;height:809px;background:#1487e2"></div>
<div class="a" style="left:0;top:807px;width:1107px;height:1px;background:#1487e2;opacity:.12"></div>
<div class="a" style="left:0;top:808px;width:1107px;height:1px;background:#1487e2"></div>


</body></html>
